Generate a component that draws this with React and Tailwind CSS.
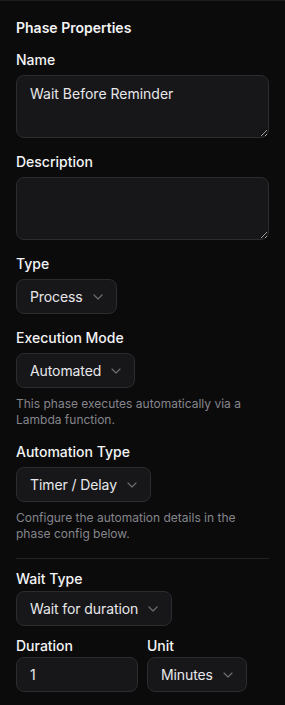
import React from 'react';

const Chevron = () => (
  <svg width="10" height="6" viewBox="0 0 10 6" fill="none" className="shrink-0">
    <path d="M1 1l4 4 4-4" stroke="#6b6b70" strokeWidth="1.2" strokeLinecap="round" strokeLinejoin="round" />
  </svg>
);

const Label = ({ children, className = 'mb-[5px]' }) => (
  <div className={`text-sm leading-5 font-[450] text-[#f4f4f5] ${className}`}>{children}</div>
);

const Select = ({ value, className = '' }) => (
  <button
    type="button"
    className={`h-[35px] inline-flex items-center gap-[10px] pl-[13px] pr-[13px] rounded-lg border border-[#2c2c30] bg-[#17171a] text-sm tracking-[-0.1px] text-[#e8e8ea] ${className}`}
  >
    <span>{value}</span>
    <Chevron />
  </button>
);

const Help = ({ children }) => (
  <p className="mt-2 text-xs leading-4 text-[#85858b]">{children}</p>
);

export default function App() {
  return (
    <div
      className="w-[285px] min-h-[705px] bg-[#0b0b0c] border-t border-[#1e1e21] px-4 pt-4 pb-4"
      style={{ fontFamily: 'Inter, "Noto Sans", sans-serif' }}
    >
      <h2 className="text-sm leading-5 font-semibold text-[#f4f4f5] mb-3 mt-px">Phase Properties</h2>

      <Label className="mb-[5px]">Name</Label>
      <textarea
        defaultValue="Wait Before Reminder"
        className="block w-full h-[63px] rounded-lg border border-[#2c2c30] bg-[#17171a] px-[13px] py-2 text-sm leading-5 text-[#e8e8ea] outline-none [color-scheme:dark]"
      />

      <Label className="mt-3.5 mb-[5px]">Description</Label>
      <textarea
        className="block w-full h-[63px] rounded-lg border border-[#2c2c30] bg-[#17171a] px-[13px] py-2 text-sm leading-5 text-[#e8e8ea] outline-none [color-scheme:dark]"
      />

      <Label className="mt-3.5 mb-[5px]">Type</Label>
      <Select value="Process" />

      <Label className="mt-3.5 mb-[5px]">Execution Mode</Label>
      <Select value="Automated" />
      <Help>This phase executes automatically via a Lambda function.</Help>

      <Label className="mt-3.5 mb-[5px]">Automation Type</Label>
      <Select value="Timer / Delay" />
      <Help>Configure the automation details in the phase config below.</Help>

      <div className="mt-4 border-t border-[#222225] pt-2.5">
        <Label className="mb-[2px]">Wait Type</Label>
        <Select value="Wait for duration" />

        <div className="mt-2.5 flex gap-[9px]">
          <div className="w-[122px]">
            <Label className="mb-[1px]">Duration</Label>
            <input
              type="text"
              defaultValue="1"
              className="block w-full h-[35px] rounded-lg border border-[#2c2c30] bg-[#17171a] px-[13px] text-sm text-[#e8e8ea] outline-none"
            />
          </div>
          <div>
            <Label className="mb-[1px]">Unit</Label>
            <Select value="Minutes" />
          </div>
        </div>
      </div>
    </div>
  );
}
